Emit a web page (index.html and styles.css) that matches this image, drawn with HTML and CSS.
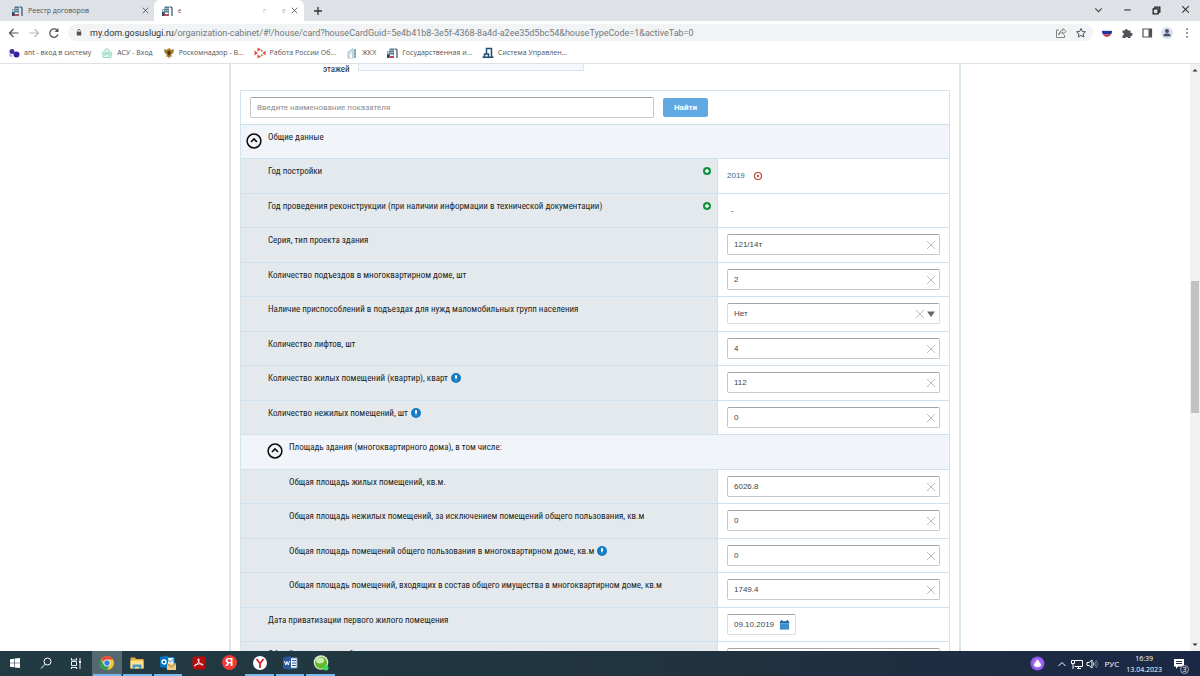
FILE: index.html
```html
<!DOCTYPE html>
<html lang="ru">
<head>
<meta charset="utf-8">
<title>Реестр договоров</title>
<link rel="stylesheet" href="styles.css">
</head>
<body>
<svg class="defs" aria-hidden="true">
  <symbol id="house" viewBox="0 0 12 12"><path d="M1 4h4v7H1z" fill="#8fa9b5"/><path d="M3.500 1.500H8V11H3.500z" fill="#54798e"/><path d="M8.500 2h1.500l1 1v8" fill="none" stroke="#315268" stroke-width="1.200"/><path d="M4.500 3h1v1h-1zM6.500 3h1v1h-1zM4.500 5h1v1h-1zM6.500 5h1v1h-1zM2 5h1v1H2z" fill="#e8f2f7"/><path d="M1 7l3 1v3H1z" fill="#29486f"/><path d="M4 7.500h3.500V9H4z" fill="#fff"/><path d="M3 9h4.500v2H3z" fill="#bd4852"/></symbol>
  <symbol id="cross" viewBox="0 0 10 10"><path d="M1 1l8 8M9 1L1 9" fill="none" stroke="currentColor"/></symbol>
  <symbol id="plus" viewBox="0 0 10 10"><circle cx="5" cy="5" r="4" fill="#16913f"/><path d="M5 3v4M3 5h4" stroke="#fff" stroke-width="1.400"/></symbol>
  <symbol id="info" viewBox="0 0 10 10"><circle cx="5" cy="5" r="5" fill="#147bc4"/><path d="M4 2.300h2v2.200L5.500 6h-1L4 4.500z" fill="#fff"/><path d="M4.500 6.600h1v1h-1z" fill="#b5d7ef"/></symbol>
  <symbol id="up" viewBox="0 0 16 16"><circle cx="8" cy="8" r="6.900" fill="none" stroke="#090b0d" stroke-width="1.500"/><path d="M5 9l3-3 3 3" fill="none" stroke="#090b0d" stroke-width="1.600"/></symbol>
</svg>

<header class="browser">
  <div class="tabs">
    <div class="tab"><svg class="ico"><use href="#house"/></svg><span class="tab-title">Реестр договоров</span><button class="tab-close" aria-label="Закрыть вкладку"><svg><use href="#cross"/></svg></button></div>
    <div class="tab active"><svg class="ico"><use href="#house"/></svg><span class="tab-title">є</span><span class="tab-rest"><span>г</span><span>е</span></span><button class="tab-close" aria-label="Закрыть вкладку"><svg><use href="#cross"/></svg></button></div>
    <button class="new-tab" aria-label="Новая вкладка"><svg viewBox="0 0 10 10"><path d="M5 1v8M1 5h8" stroke="#333" stroke-width="1.300"/></svg></button>
    <div class="window">
      <button aria-label="Поиск вкладок"><svg viewBox="0 0 10 10"><path d="M2 3l3 3 3-3" fill="none" stroke="#444"/></svg></button>
      <button aria-label="Свернуть"><svg viewBox="0 0 10 10"><path d="M2 4.500h6" stroke="#333"/></svg></button>
      <button aria-label="Окно"><svg viewBox="0 0 10 10"><path d="M2 3.500h4.500V8H2zM3.500 3.500V2H8v4.500H6.500" fill="none" stroke="#222" stroke-width="1.200"/></svg></button>
      <button aria-label="Закрыть"><svg viewBox="0 0 10 10"><path d="M2 1l6 6M8 1L2 7" stroke="#333"/></svg></button>
    </div>
  </div>
  <div class="toolbar">
    <button class="nav" aria-label="Назад"><svg viewBox="0 0 12 12"><path d="M10.500 6h-9M5.500 2l-4 4 4 4" fill="none" stroke="#505357" stroke-width="1.200"/></svg></button>
    <button class="nav" aria-label="Вперёд"><svg viewBox="0 0 12 12"><path d="M1.500 6h9M6.500 2l4 4-4 4" fill="none" stroke="#b8babd" stroke-width="1.200"/></svg></button>
    <button class="nav" aria-label="Обновить"><svg viewBox="0 0 12 12"><path d="M9.700 4A4.200 4.200 0 1 0 10 7.500" fill="none" stroke="#505357" stroke-width="1.300"/><path d="M10.500 1v4h-4z" fill="#505357"/></svg></button>
    <div class="address">
      <svg class="lock" viewBox="0 0 8 10"><path d="M1 4h6v5H1z" fill="#505357"/><path d="M2.300 4V2.500a1.700 1.700 0 0 1 3.400 0V4" fill="none" stroke="#505357"/></svg>
      <span class="url"><b>my.dom.gosuslugi.ru</b>/organization-cabinet/#!/house/card?houseCardGuid=5e4b41b8-3e5f-4368-8a4d-a2ee35d5bc54&amp;houseTypeCode=1&amp;activeTab=0</span>
      <button aria-label="Поделиться"><svg viewBox="0 0 12 12"><path d="M4 3H1.500v7.500h8V8M3.500 8c.5-3 2-4.500 4.500-4.500V1.500L11 4.500 8 7.300V5.500C6 5.500 4.500 6.300 3.500 8z" fill="none" stroke="#666" stroke-width=".8"/></svg></button>
      <button aria-label="В закладки"><svg viewBox="0 0 12 12"><path d="M6 1.500l1.300 3 3.200.3-2.400 2.100.7 3.200L6 8.400l-2.800 1.700.7-3.200-2.400-2.100 3.200-.3z" fill="none" stroke="#505357"/></svg></button>
    </div>
    <div class="tools">
      <button aria-label="Госуслуги"><svg viewBox="0 0 12 12"><path d="M1 3h10v2H1z" fill="#dfe3ec"/><path d="M1 4h10c0 1.500-.3 2.500-1 3.500H2C1.300 6.500 1 5.500 1 4z" fill="#24349c"/><path d="M2 7.500h8c-1 1.500-2.300 2.300-4 2.300S3 9 2 7.500z" fill="#cb3444"/></svg></button>
      <button aria-label="Расширения"><svg viewBox="0 0 12 12"><path d="M1.500 3.500h2.300a1.500 1.500 0 1 1 3 0h2.700v2.400a1.500 1.500 0 1 1 0 2.800V11H7.200a1.500 1.500 0 0 0-2.900 0H1.500V8.500a1.300 1.300 0 0 0 0-2.700z" fill="#505357"/></svg></button>
      <button aria-label="Боковая панель"><svg viewBox="0 0 12 12"><path d="M2 2h8.500v8H2z" fill="none" stroke="#505357" stroke-width="1.200"/><path d="M7.500 2h3v8h-3z" fill="#505357"/></svg></button>
      <button class="profile" aria-label="Профиль"><svg viewBox="0 0 12 12"><circle cx="6" cy="4" r="2" fill="#405269"/><path d="M2.300 9.300C2.300 7 4 6.500 6 6.500s3.700.5 3.700 2.800z" fill="#405269"/></svg></button>
      <button aria-label="Меню"><svg viewBox="0 0 12 12"><path d="M5.300 1.500h1.500V3H5.300zM5.300 5.300h1.500v1.500H5.300zM5.300 9h1.500v1.500H5.300z" fill="#505357"/></svg></button>
    </div>
  </div>
  <nav class="bookmarks">
    <a href="#"><svg class="ico" viewBox="0 0 12 12"><circle cx="4" cy="4.500" r="2.500" fill="#3f2b9d"/><circle cx="8.500" cy="7.500" r="3" fill="#38209d"/><path d="M1 6l4 3-2 1.500-2-2z" fill="#aebdeb"/></svg>ant - вход в систему</a>
    <a href="#"><svg class="ico" viewBox="0 0 12 12"><path d="M1.500 5.500L6 1.500l4.500 4-.7 5H2.200zM3.500 6h5M4 9V6.500h4V9" fill="#dff5ec" stroke="#93d3b9"/></svg>АСУ - Вход</a>
    <a href="#"><svg class="ico" viewBox="0 0 12 12"><path d="M1 2l3 1 1-1.500h2L8 3l3-1-.7 4L8 7.500l1 2-2 .3L6 11.500 5 9.800l-2-.3 1-2L1.700 6z" fill="#a47b22"/><path d="M4.500 4h3v3L6 8.500 4.500 7z" fill="#4b351d"/></svg>Роскомнадзор - В...</a>
    <a href="#"><svg class="ico" viewBox="0 0 12 12"><path d="M3.500.5l3.500 2-3.500 2zM11.500 3.500v5L8.500 6zM3.500 7.500l3.500 2-3.500 2zM.5 3.500L4 6 .5 8.500z" fill="#d94f38"/><path d="M7 2.500l2.500 1.300L7 5zM7 7l2.500 1.300L7 9.500z" fill="#d56a52"/></svg>Работа России Об...</a>
    <a href="#"><svg class="ico" viewBox="0 0 12 12"><path d="M2 5l5-3.500V11H2z" fill="#d5e3eb" stroke="#a6bfcb"/><path d="M8 2h2v9H8z" fill="#8ea9b8"/><path d="M4 7h2v4H4z" fill="#fff"/></svg>ЖКХ</a>
    <a href="#"><svg class="ico"><use href="#house"/></svg>Государственная и...</a>
    <a href="#"><svg class="ico" viewBox="0 0 12 12"><path d="M4.500 7V1.500h5V10M2.500 10V7h4v3M.5 10.300h11" fill="none" stroke="#1e4e73" stroke-width="1.500"/></svg>Система Управлен...</a>
  </nav>
</header>

<div class="viewport">
  <main class="page">
    <div class="card">
      <div class="floors"><label for="floors">этажей</label><input id="floors" disabled></div>
      <form class="search">
        <input class="query" type="text" aria-label="Наименование показателя" placeholder="Введите наименование показателя">
        <button class="find" type="button">Найти</button>
      </form>
      <table class="props">
        <colgroup><col><col class="value-col"></colgroup>
        <tbody>
        <tr class="section"><th colspan="2"><div class="head"><button aria-label="Свернуть раздел"><svg><use href="#up"/></svg></button><span>Общие данные</span></div></th></tr>
        <tr><th><div class="label">Год постройки<button class="add" aria-label="Добавить"><svg><use href="#plus"/></svg></button></div></th><td><div class="year"><a href="#">2019</a><button aria-label="Удалить"><svg viewBox="0 0 10 10"><circle cx="5" cy="5" r="3.500" fill="none" stroke="#b5473d" stroke-width="1.200"/><path d="M3.800 3.800l2.400 2.400M6.200 3.800L3.800 6.200" stroke="#b5473d"/></svg></button></div></td></tr>
        <tr><th><div class="label">Год проведения реконструкции (при наличии информации в технической документации)<button class="add" aria-label="Добавить"><svg><use href="#plus"/></svg></button></div></th><td><div class="year empty">-</div></td></tr>
        <tr><th><label class="label" for="f1">Серия, тип проекта здания</label></th><td><div class="field"><input id="f1" value="121/14т"><button aria-label="Очистить"><svg><use href="#cross"/></svg></button></div></td></tr>
        <tr><th><label class="label" for="f2">Количество подъездов в многоквартирном доме, шт</label></th><td><div class="field"><input id="f2" value="2"><button aria-label="Очистить"><svg><use href="#cross"/></svg></button></div></td></tr>
        <tr><th><label class="label" for="f3">Наличие приспособлений в подъездах для нужд маломобильных групп населения</label></th><td><div class="field pick"><select id="f3"><option>Нет</option><option>Да</option></select><button aria-label="Очистить"><svg><use href="#cross"/></svg></button><svg class="arrow" viewBox="0 0 10 10"><path d="M1 2.500h8L5 8z" fill="#666"/></svg></div></td></tr>
        <tr><th><label class="label" for="f4">Количество лифтов, шт</label></th><td><div class="field"><input id="f4" value="4"><button aria-label="Очистить"><svg><use href="#cross"/></svg></button></div></td></tr>
        <tr><th><label class="label" for="f5">Количество жилых помещений (квартир), кварт<svg class="info"><use href="#info"/></svg></label></th><td><div class="field"><input id="f5" value="112"><button aria-label="Очистить"><svg><use href="#cross"/></svg></button></div></td></tr>
        <tr><th><label class="label" for="f6">Количество нежилых помещений, шт<svg class="info"><use href="#info"/></svg></label></th><td><div class="field"><input id="f6" value="0"><button aria-label="Очистить"><svg><use href="#cross"/></svg></button></div></td></tr>
        <tr class="section"><th colspan="2"><div class="head nested"><button aria-label="Свернуть раздел"><svg><use href="#up"/></svg></button><span>Площадь здания (многоквартирного дома), в том числе:</span></div></th></tr>
        <tr><th><label class="label nested" for="f7">Общая площадь жилых помещений, кв.м.</label></th><td><div class="field"><input id="f7" value="6026.8"><button aria-label="Очистить"><svg><use href="#cross"/></svg></button></div></td></tr>
        <tr><th><label class="label nested" for="f8">Общая площадь нежилых помещений, за исключением помещений общего пользования, кв.м</label></th><td><div class="field"><input id="f8" value="0"><button aria-label="Очистить"><svg><use href="#cross"/></svg></button></div></td></tr>
        <tr><th><label class="label nested" for="f9">Общая площадь помещений общего пользования в многоквартирном доме, кв.м<svg class="info"><use href="#info"/></svg></label></th><td><div class="field"><input id="f9" value="0"><button aria-label="Очистить"><svg><use href="#cross"/></svg></button></div></td></tr>
        <tr><th><label class="label nested" for="f10">Общая площадь помещений, входящих в состав общего имущества в многоквартирном доме, кв.м</label></th><td><div class="field"><input id="f10" value="1749.4"><button aria-label="Очистить"><svg><use href="#cross"/></svg></button></div></td></tr>
        <tr><th><label class="label" for="f11">Дата приватизации первого жилого помещения</label></th><td><div class="field date"><input id="f11" value="09.10.2019"><button aria-label="Календарь"><svg viewBox="0 0 12 12"><path d="M1 2h10v9H1z" fill="#3d8fc8"/><path d="M1 2h10v2H1z" fill="#23679b"/><path d="M3 .5v2M9 .5v2" stroke="#23679b" stroke-width="1.500"/><path d="M1 4.500h10" stroke="#8fc0e0" stroke-width=".6"/></svg></button></div></td></tr>
        <tr><th><label class="label" for="f12">Общий износ здания, %</label></th><td><div class="field"><input id="f12"></div></td></tr>
        </tbody>
      </table>
    </div>
  </main>
  <div class="scrollbar"><svg viewBox="0 0 10 10"><path d="M2.500 6.500h5L5 4z" fill="#333"/></svg><div class="thumb"></div><svg viewBox="0 0 10 10"><path d="M2.500 3.500h5L5 6z" fill="#333"/></svg></div>
</div>

<footer class="taskbar">
  <div class="apps">
    <button aria-label="Пуск"><svg viewBox="0 0 16 16"><path d="M3 4.300l4-.6v4H3zM7.600 3.600L13 3v4.700H7.600zM3 8.300h4v4l-4-.6zM7.600 8.300H13V13l-5.400-.6z" fill="#fff"/></svg></button>
    <button aria-label="Поиск"><svg viewBox="0 0 16 16"><circle cx="9.500" cy="6.500" r="3.500" fill="none" stroke="#fff"/><path d="M7 9.300L3 13.500" stroke="#fff"/></svg></button>
    <button aria-label="Представление задач"><svg viewBox="0 0 16 16"><path d="M3 5h6M3.500 6.500h5v4h-5zM3 12.500h6M3.500 3v2M8.500 3v2M3.500 12.500V14M8.500 12.500V14M12 3v11" fill="none" stroke="#e9eef0"/><path d="M11 6h2v2h-2z" fill="#fff"/></svg></button>
    <button class="open current" aria-label="Chrome"><svg viewBox="0 0 16 16"><circle cx="8" cy="8" r="7" fill="#f6c62d"/><path d="M8 8L1.900 4.500A7 7 0 0 1 14.100 4.500H8z" fill="#e64b3c"/><path d="M1.900 4.500A7 7 0 0 0 8 15l3-5.300L8 8 5 9.700z" fill="#2f9e55"/><circle cx="8" cy="8" r="3.500" fill="#fff"/><circle cx="8" cy="8" r="2.700" fill="#397de5"/></svg></button>
    <button class="open" aria-label="Проводник"><svg viewBox="0 0 16 16"><path d="M1.500 2.500H6L7 4h7.500v9.500h-13z" fill="#e7ae37"/><path d="M1.500 5.500h13v8h-13z" fill="#fce38c"/><path d="M3.500 14V9.500h9V14H10v-2H6v2z" fill="#4b9ac7"/></svg></button>
    <button class="open" aria-label="Outlook"><svg viewBox="0 0 16 16"><path d="M7 2.500h7v8H7z" fill="#e9f4fb" stroke="#1683c8"/><path d="M7 4l3.500 3L14 3.500" fill="none" stroke="#1683c8"/><path d="M0 2l8-1.500v13L0 12z" fill="#0873bd"/><circle cx="4" cy="7" r="2" fill="none" stroke="#fff" stroke-width="1.300"/><path d="M7 8.500h9V15H7z" fill="#f0cc83"/><path d="M7 8.500l4.500 3.500L16 8.500" fill="none" stroke="#a77a39"/></svg></button>
    <button aria-label="Acrobat"><svg viewBox="0 0 16 16"><rect x="1.500" y="1.500" width="13" height="13" rx="2" fill="#b40d0c"/><path d="M7.500 4c1.500 0 .5 4-3.500 7-1 .5-.7-1 1-1.500 3-.9 7-.8 7 .3 0 1.200-5-1.300-5-5.800z" fill="none" stroke="#fff"/></svg></button>
    <button aria-label="Яндекс"><span class="disc">Я</span></button>
    <button class="open" aria-label="Яндекс Браузер"><svg viewBox="0 0 16 16"><circle cx="8" cy="8" r="7" fill="#fff"/><path d="M4.500 4L8 8.500V13M11.500 4L8 8.500" fill="none" stroke="#d8232a" stroke-width="1.800"/></svg></button>
    <button class="open" aria-label="Word"><svg viewBox="0 0 16 16"><path d="M8 3h7v10H8z" fill="#f6f8fc" stroke="#7894c4"/><path d="M10 5.500h4M10 8h4M10 10.500h4" stroke="#2b579a"/><path d="M1 2.500L9 1v14l-8-1.500z" fill="#2b579a"/><path d="M2.500 6l1.200 4L5 6.500 6.300 10l1.200-4" fill="none" stroke="#fff"/></svg></button>
    <button class="open" aria-label="Клиент"><svg viewBox="0 0 16 16"><circle cx="8" cy="7.500" r="7.300" fill="#dff0d4"/><circle cx="8" cy="7.800" r="6" fill="#63b82e"/><ellipse cx="7" cy="5.500" rx="4" ry="3" fill="#c9ebae"/><circle cx="13" cy="13" r="2.500" fill="#35e052"/></svg></button>
  </div>
  <div class="tray">
    <svg class="alice" viewBox="0 0 16 16"><circle cx="8" cy="8" r="7.500" fill="#9055ef"/><circle cx="8" cy="8" r="5.500" fill="#a56bf3"/><path d="M8 3.500l3.500 5c1 1.700-1 3.300-3.500 3.300S3.500 10.200 4.500 8.500z" fill="#fff"/></svg>
    <svg viewBox="0 0 12 12"><path d="M2.500 8L6 4.500 9.500 8" fill="none" stroke="#fff"/></svg>
    <svg viewBox="0 0 12 12"><path d="M3.500 2.500h8v6h-8M6 10.500h4M7.500 8.500v2M2 11V5M.5 2.500h3v3h-3z" fill="none" stroke="#fff"/></svg>
    <svg viewBox="0 0 12 12"><path d="M1 4.500h2l3-2.500v8L3 7.500H1z" fill="none" stroke="#fff"/><path d="M7.500 4.500q1 1.500 0 3" fill="none" stroke="#fff"/><path d="M9 3q2 3 0 6M10.500 2q2 4 0 8" fill="none" stroke="#6b778a"/></svg>
    <span class="lang">РУС</span>
    <div class="clock"><time>16:39</time><time>13.04.2023</time></div>
    <div class="notes"><svg viewBox="0 0 12 12"><path d="M1 1h10v7.500H5L3 11V8.500H1z" fill="#fff"/><path d="M3 3.500h6M3 5.500h6" stroke="#1d2b45"/></svg><span class="count">3</span></div>
  </div>
</footer>
</body>
</html>
```
FILE: styles.css
```css
* { box-sizing: border-box; }
body { margin: 0; height: 100vh; display: flex; flex-direction: column; overflow: hidden; background: #fff; font-family: "Liberation Sans", Arial, sans-serif; font-size: 8px; color: #444; }
button { display: flex; align-items: center; justify-content: center; padding: 0; border: 0; background: none; font: inherit; color: inherit; }
button svg { display: block; width: 100%; height: 100%; }
a { text-decoration: none; color: inherit; }
.defs { position: absolute; width: 0; height: 0; }
.ico { width: 12px; height: 12px; flex: none; }

.browser { flex: none; border-bottom: 1px solid #dfe2e4; font-family: "Open Sans", "Noto Sans", sans-serif; color: #505357; }
.tabs { display: flex; align-items: center; height: 21px; background: #dee1e6; }
.tab { display: flex; align-items: center; gap: 5px; width: 154px; height: 21px; padding: 0 5px 0 11px; font-size: 7px; }
.tab.active { width: 150px; padding: 0 6px 0 7px; background: #fff; border-radius: 6px 6px 0 0; }
.tab-title { flex: 1; white-space: nowrap; }
.tab-rest { display: flex; gap: 16px; color: #b5b5b5; }
.tab-close { width: 7px; height: 7px; color: #333; }
.new-tab { width: 10px; height: 10px; margin-left: 9px; }
.window { display: flex; gap: 18px; margin-left: auto; padding-right: 9px; }
.window button { width: 11px; height: 11px; }
.toolbar { display: flex; align-items: center; height: 23px; padding: 0 7px 0 8px; gap: 8px; }
.nav { width: 12px; height: 12px; }
.address { flex: 1; display: flex; align-items: center; gap: 8px; height: 17px; padding: 0 6px 0 8px; border-radius: 9px; background: #f1f3f4; }
.address button { width: 12px; height: 12px; }
.lock { width: 6px; height: 9px; }
.url { flex: 1; font-family: Roboto, sans-serif; font-size: 9px; line-height: 12px; white-space: nowrap; color: #74787c; }
.url b { font-weight: 400; color: #303336; }
.tools { display: flex; gap: 8px; }
.tools button { width: 12px; height: 12px; }
.tools .profile { border-radius: 50%; background: #dbe0ea; }
.bookmarks { display: flex; align-items: center; gap: 10px; height: 19px; padding: 0 8px 2px; font-size: 7px; }
.bookmarks a { display: flex; align-items: center; gap: 4px; white-space: nowrap; }

.viewport { flex: 1; min-height: 0; display: flex; overflow: hidden; }
.page { flex: 1; min-width: 0; overflow: hidden; }
.card { max-width: 732px; margin: 0 auto; padding: 0 9px; border: solid #d8e6ec; border-width: 0 2px; }
.floors { display: flex; height: 26px; gap: 8px; padding-left: 83px; font-family: "Roboto Condensed", Roboto, sans-serif; font-size: 9px; line-height: 10px; color: #222; }
.floors input { width: 226px; height: 7px; padding: 0; border: 1px solid #dbe3ee; border-top: 0; background: #f5f8fc; }
.search { display: flex; align-items: center; gap: 9px; height: 34px; padding: 0 9px; border: 1px solid #d3e4ee; border-bottom: 0; }
.query { width: 404px; height: 21px; padding: 0 6px; border: 1px solid #c8c8c8; border-top-color: #a4a4a4; border-radius: 2px; font: 8px Roboto, "Liberation Sans", sans-serif; }
.query::placeholder { color: #8c8c8c; opacity: 1; }
.find { width: 45px; height: 19px; border-radius: 2px; background: #60a9e3; color: #fff; font-family: Roboto, sans-serif; font-weight: 700; }

.props { width: 100%; table-layout: fixed; border-collapse: separate; border-spacing: 0; border-right: 1px solid #d3e4ee; border-left: 1px solid #d3e4ee; }
.value-col { width: 232px; }
.props tr { height: 34px; }
.props tr:nth-child(even) { height: 35px; }
.props th, .props td { padding: 0; border-top: 1px solid #cfe1ee; vertical-align: top; }
.props th { background: #e4e9ee; text-align: left; font-weight: 400; font-family: "Roboto Condensed", Roboto, sans-serif; font-size: 9px; color: #1c1f22; }
.props td { padding: 6px 9px 0; border-left: 1px solid #cfe1ee; }
.props .section th { background: #f1f4f8; }
.label { display: flex; align-items: center; height: 12px; margin-top: 6px; padding: 0 5px 0 27px; white-space: nowrap; }
.label.nested { padding-left: 48px; }
.add { width: 10px; height: 10px; margin-left: auto; }
.info { width: 10px; height: 10px; margin-left: 3px; }
.head { display: flex; gap: 6px; padding: 6px 0 0 5px; line-height: 12px; }
.head.nested { padding-left: 26px; }
.head button { width: 16px; height: 16px; margin-top: 2px; }
.year { display: flex; align-items: center; gap: 8px; height: 21px; color: #33698a; }
.year button { width: 10px; height: 10px; }
.year.empty { padding-left: 4px; color: #333; }
.field { display: flex; align-items: center; height: 21px; padding: 0 3px 0 6px; border: 1px solid #c8c8c8; border-top-color: #a4a4a4; border-radius: 2px; background: #fff; }
.field input, .field select { flex: 1; min-width: 0; height: 17px; padding: 0; border: 0; outline: 0; appearance: none; background: none; font: inherit; color: #444; }
.field button { width: 10px; height: 10px; color: #bbb; }
.field.pick { border-color: #a4a4a4 #dcdcdc #dcdcdc; }
.arrow { width: 10px; height: 10px; margin-left: 1px; }
.field.date { width: 69px; padding-right: 5px; border-color: #a4a4a4 #dcdcdc #dcdcdc; }
.field.date button { width: 11px; height: 12px; }

.scrollbar { display: flex; flex-direction: column; width: 10px; background: #f1f1f1; }
.scrollbar svg { width: 10px; height: 12px; }
.thumb { height: 132px; margin: 205px 1px auto; background: #c1c1c1; }

.taskbar { flex: none; display: flex; height: 25px; justify-content: space-between; background: linear-gradient(90deg, #223b43, #20323f 60%, #1a2845); color: #fff; }
.apps { display: flex; width: 336px; }
.apps button { flex: 1; border-bottom: 2px solid transparent; }
.apps .open { border-image: linear-gradient(90deg, transparent 10%, #76b9ed 10%, #76b9ed 90%, transparent 90%) 2; }
.apps .current { background: #54686f; }
.apps svg { width: 16px; height: 16px; }
.disc { width: 15px; height: 15px; border-radius: 50%; background: #f33a38; font-size: 11px; font-weight: 700; line-height: 15px; }
.tray { display: flex; align-items: center; gap: 3px; padding-right: 13px; font-family: "Open Sans", "Noto Sans", sans-serif; font-size: 7px; }
.tray svg { width: 12px; height: 12px; }
.tray .alice { width: 15px; height: 15px; margin-right: 8px; }
.lang { margin: 0 4px; font-size: 8px; }
.clock { display: flex; flex-direction: column; align-items: center; line-height: 11px; }
.notes { position: relative; margin-left: 8px; width: 14px; height: 12px; }
.count { position: absolute; right: -2px; bottom: -4px; width: 9px; height: 9px; border: 1px solid #aaa; border-radius: 50%; background: #1d2b45; line-height: 7px; text-align: center; }
```
